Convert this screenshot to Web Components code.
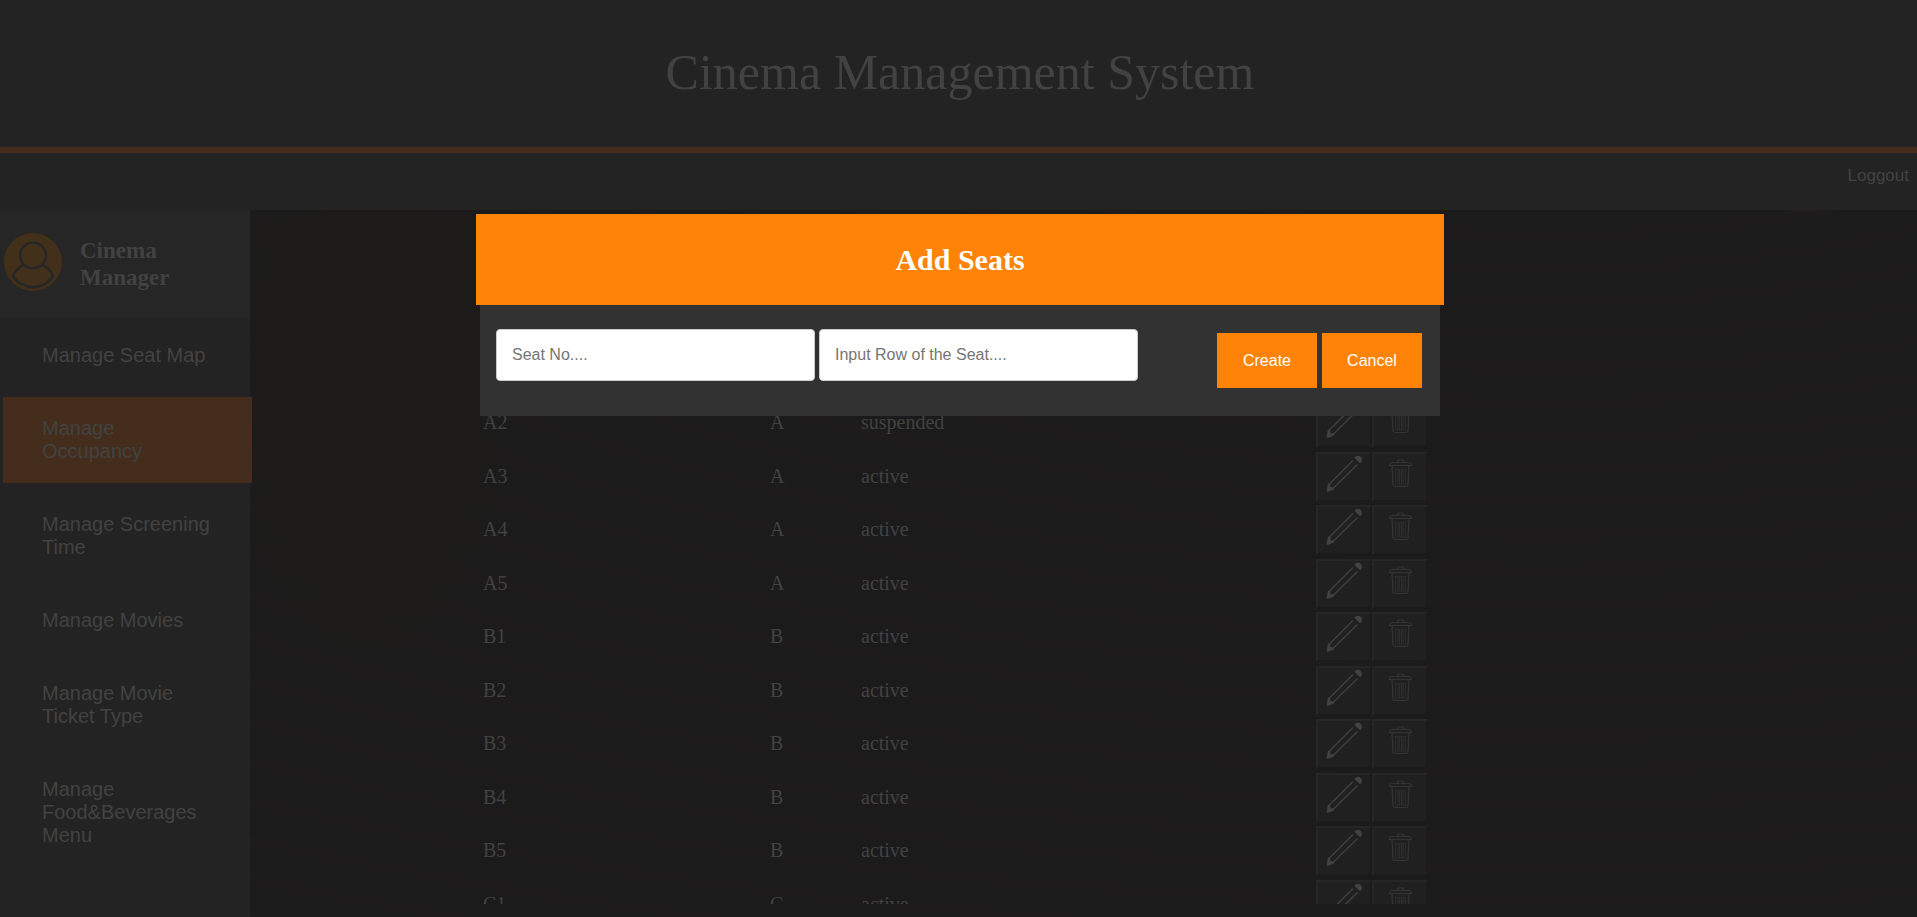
<!DOCTYPE html>
<html lang="en">
<head>
<meta charset="utf-8">
<title>Cinema Management System</title>
<style>
html, body { height: 100%; margin: 0; }
body { background: #1b1b1b; color: #424242; font-family: "Liberation Serif", "Times New Roman", serif; overflow: hidden; }
</style>
</head>
<body>
<cinema-app></cinema-app>

<template id="t-app">
<style>
:host { display: flex; flex-direction: column; height: 100%; position: relative; --edge: 3px; --orange: #ff8307; --brown: #442d1c; --panel: #232323; }
.main { flex: 1; min-height: 0; display: flex; }
side-menu { position: relative; z-index: 1; }
.stage { flex: 1; min-width: 0; padding: 0 488px 13px 231px; overflow: hidden;
  background:
    radial-gradient(ellipse 220px 420px at 120px 180px, #1d1b1a, transparent),
    repeating-radial-gradient(ellipse 1400px 520px at 1300px -200px, #1b1b1b 0 40px, #1d1b1b 60px 70px, #1b1b1b 90px); }
.overlay { position: absolute; inset: 214px 0 auto 0; padding-left: var(--edge); display: flex; justify-content: center; }
</style>
<app-header></app-header>
<app-nav></app-nav>
<div class="main">
  <side-menu>
    <menu-item>Manage Seat Map</menu-item>
    <menu-item active>Manage Occupancy</menu-item>
    <menu-item>Manage Screening Time</menu-item>
    <menu-item>Manage Movies</menu-item>
    <menu-item>Manage Movie Ticket Type</menu-item>
    <menu-item>Manage Food&amp;Beverages Menu</menu-item>
  </side-menu>
  <main class="stage"><seat-table></seat-table></main>
</div>
<div class="overlay"><seat-dialog>Add Seats</seat-dialog></div>
</template>

<template id="t-header">
<style>
:host { display: block; background: var(--panel); border-bottom: 6px solid var(--brown); padding: 43px 0 46px var(--edge); text-align: center; }
h1 { margin: 0; font-size: 50px; line-height: 58px; font-weight: 400; }
</style>
<h1>Cinema Management System</h1>
</template>

<template id="t-nav">
<style>
:host { display: flex; justify-content: flex-end; background: var(--panel); padding: 13px 8px 24px; font: 17px/20px "Liberation Sans", Arial, sans-serif; }
a { color: inherit; text-decoration: none; }
</style>
<a href="#logout">Loggout</a>
</template>

<template id="t-side">
<style>
:host { display: flex; flex-direction: column; flex: none; width: 250px; background: var(--panel); }
.user { display: flex; align-items: center; gap: 18px; height: 109px; padding: 0 4px; margin-bottom: 5px; background: #262626; box-sizing: border-box; }
h2 { margin: 0; width: 100px; font-size: 23px; line-height: 27px; padding-bottom: 2px; }
svg { flex: none; margin-bottom: 6px; }
nav { display: flex; flex-direction: column; gap: 10px; padding-left: var(--edge); margin-right: -2px; }
</style>
<div class="user">
  <svg width="58" height="58" viewBox="0 0 58 58" aria-hidden="true">
    <circle cx="29" cy="29" r="29" fill="#43301b"/>
    <g fill="none" stroke="#262626" stroke-width="2.400" stroke-linejoin="round">
      <circle cx="29" cy="22.500" r="12.900"/>
      <path d="M19.500 31.800C15.500 33.500 10.500 38.500 8.800 43.300C13.500 50 21 54 29 54S44.500 50 49.200 43.300C47.500 38.500 42.500 33.500 38.500 31.800"/>
    </g>
  </svg>
  <h2>Cinema Manager</h2>
</div>
<nav><slot></slot></nav>
</template>

<template id="t-item">
<style>
:host { display: block; font: 20px/23px "Liberation Sans", Arial, sans-serif; }
:host([active]) { background: var(--brown); }
a { display: block; padding: 20px 39px; color: inherit; text-decoration: none; }
</style>
<a href="#"><slot></slot></a>
</template>

<template id="t-table">
<style>
:host { display: block; height: 100%; overflow: hidden; }
table { width: 100%; border-collapse: collapse; table-layout: fixed; font-size: 20px; line-height: 22px; margin-top: 188px; }
td { padding: 0 2px; vertical-align: top; }
td > span { display: block; padding-top: 13px; }
tr { height: 53px; }
tr:nth-child(odd) { height: 54px; }
.c1 { width: 287px; } .c2 { width: 91px; } .c4 { width: 113px; }
td:last-child { padding: 0; }
</style>
<table>
<colgroup><col class="c1"><col class="c2"><col><col class="c4"></colgroup>
<tbody></tbody>
</table>
</template>

<template id="t-actions">
<style>
:host { display: flex; }
button { width: 56px; height: 50px; padding: 0; margin: 0; display: flex; justify-content: center; align-items: flex-start; color: inherit; background: #202020; border: 2px solid; border-color: #262626 #1b1b1b #1b1b1b #262626; }
svg { display: block; }
</style>
<button type="button" aria-label="Edit">
  <svg width="40" height="42" viewBox="0 0 40 42">
    <path d="M5 30.500L29 6.500M9 34.500L33.500 10.500" fill="none" stroke="#3e3e3e" stroke-width="1.600"/>
    <path d="M2.500 37.500L4 29.500L6 30L6.500 33L9.500 33.500L10 35.500L4 37.800Z" fill="#424242"/>
    <path d="M30.500 4C31.500 1.500 35.500 1 37.200 3.500C38.800 6 37.500 8.500 36 9.200Z" fill="#424242"/>
  </svg>
</button>
<button type="button" aria-label="Delete">
  <svg width="26" height="42" viewBox="0 0 26 42">
    <g fill="none" stroke="#343434" stroke-width="1.200">
      <path d="M10.500 8.500V7Q10.500 6 11.500 6H15.500Q16.500 6 16.500 7V8.500"/>
      <path d="M2.500 11.500Q2.500 8.500 6 8.500H21Q24.500 8.500 24.500 11.500Z"/>
      <path d="M5 12L6 31Q6.200 32.500 8 32.500H19Q20.800 32.500 21 31L22 12"/>
      <path d="M8.500 15.500V30H11V15.500ZM12.500 15.500V30H14.500V15.500ZM16 15.500V30H18.500V15.500Z" stroke="#2c2c2c"/>
    </g>
  </svg>
</button>
</template>

<template id="t-dialog">
<style>
:host { display: block; width: 968px; max-width: 100%; }
h2 { margin: 0; padding: 28px 0; background: var(--orange); color: #fff; text-align: center; font-size: 30px; line-height: 35px; }
form { display: flex; align-items: flex-start; gap: 4px; margin: 0 4px; padding: 24px 18px 28px 16px; background: #323232; }
input { box-sizing: border-box; flex: 0 1 319px; min-width: 0; height: 52px; padding: 0 15px; border: 1px solid #ccc; border-radius: 4px; background: #fff; color: #222; font: 16px "Liberation Sans", Arial, sans-serif; }
input::placeholder { color: #757575; opacity: 1; }
.actions { display: flex; gap: 5px; margin-left: auto; padding-top: 4px; }
button { width: 100px; height: 55px; border: 0; padding: 0; background: var(--orange); color: #fff; font: 16px "Liberation Sans", Arial, sans-serif; }
</style>
<h2><slot></slot></h2>
<form>
  <input type="text" placeholder="Seat No...." aria-label="Seat number">
  <input type="text" placeholder="Input Row of the Seat...." aria-label="Row of the seat">
  <div class="actions"><button type="button">Create</button><button type="button">Cancel</button></div>
</form>
</template>

<script>
const define = (name, tpl, init) => customElements.define(name, class extends HTMLElement {
  constructor() {
    super();
    this.attachShadow({ mode: "open" }).append(document.getElementById(tpl).content.cloneNode(true));
    if (init) init(this.shadowRoot);
  }
});
define("row-actions", "t-actions");
define("seat-table", "t-table", root => {
  const seats = ["A2", "A3", "A4", "A5", "B1", "B2", "B3", "B4", "B5", "C1"];
  const body = root.querySelector("tbody");
  for (const seat of seats) {
    const row = body.insertRow();
    for (const text of [seat, seat[0], seat === "A2" ? "suspended" : "active"]) {
      const span = document.createElement("span");
      span.textContent = text;
      row.insertCell().append(span);
    }
    row.insertCell().append(document.createElement("row-actions"));
  }
});
define("app-header", "t-header");
define("app-nav", "t-nav");
define("menu-item", "t-item");
define("side-menu", "t-side");
define("seat-dialog", "t-dialog");
define("cinema-app", "t-app");
</script>
</body>
</html>
